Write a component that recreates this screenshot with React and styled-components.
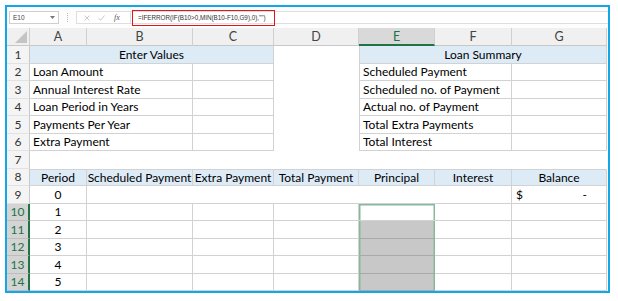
import React from 'react';
import styled, { createGlobalStyle, css } from 'styled-components';

const GREEN = '#217346';
const SEL = '#86b99b';
const LINE = '#d2d2d2';
const HDR_BLUE = '#ddebf7';

const Global = createGlobalStyle`
  html, body { margin: 0; padding: 0; background: #fff; }
  body { font-family: Lato, "Liberation Sans", sans-serif; }
`;

const Frame = styled.div`
  margin: 5px 0 0 5px;
  width: 605px;
  height: 288px;
  box-sizing: border-box;
  border: 2px solid #12a7e6;
  display: flex;
  flex-direction: column;
  overflow: hidden;
  background: #fff;
`;

const Toolbar = styled.div`
  flex: none;
  height: 21px;
  display: flex;
  align-items: center;
  background: #fdfdfd;
  font-family: "Liberation Sans", Arial, sans-serif;
`;

const NameBox = styled.div`
  box-sizing: border-box;
  margin-left: 2px;
  width: 50px;
  height: 13px;
  border: 1px solid #cfcfcf;
  background: #fff;
  display: flex;
  align-items: center;
  justify-content: space-between;
  padding: 0 3px 0 3px;
  font-size: 6.5px;
  color: #444;
`;

const Dots = styled.div`
  margin-left: 8px;
  width: 2px;
  height: 9px;
  border-left: 1px dotted #b8b8b8;
`;

const ButtonBox = styled.div`
  box-sizing: border-box;
  margin-left: 6px;
  width: 54px;
  height: 13px;
  display: flex;
  align-items: center;
  padding-left: 7px;
  gap: 8px;
  border: 1px solid #dedede;
  border-right: none;
  background: #fff;
`;

const Fx = styled.span`
  font-family: "Liberation Serif", serif;
  font-style: italic;
  font-size: 8px;
  color: #555;
  margin-left: 1px;
`;

const FormulaBar = styled.div`
  box-sizing: border-box;
  flex: 1;
  height: 13px;
  display: flex;
  align-items: center;
  border: 1px solid #dedede;
  border-right: none;
  background: #fff;
`;

const FormulaText = styled.div`
  box-sizing: border-box;
  flex: none;
  margin-left: 1px;
  width: 143px;
  height: 16px;
  border: 1.5px solid #e3141b;
  display: flex;
  align-items: center;
  padding-left: 5px;
  font-size: 6.3px;
  color: #333;
  white-space: nowrap;
`;

const Sheet = styled.div`
  flex: none;
  display: grid;
  grid-template-columns: 23px 57px 106px 81px 85px 76px 77px 95px;
  grid-template-rows: 18px repeat(14, 17.5px);
  font-size: 12px;
  color: #000;
`;

const Corner = styled.div`
  box-sizing: border-box;
  background: #f0f0f0;
  border-right: 1px solid #d0d0d0;
  border-bottom: 1px solid #c8c8c8;
  display: flex;
  align-items: flex-end;
  justify-content: flex-end;
  padding: 0 2px 2px 0;
`;

const ColHeader = styled.div`
  box-sizing: border-box;
  display: flex;
  align-items: center;
  justify-content: center;
  background: ${p => (p.$active ? '#d9d9d9' : '#f0f0f0')};
  color: ${p => (p.$active ? GREEN : '#444')};
  border-right: 1px solid #d0d0d0;
  border-bottom: ${p => (p.$active ? `2px solid ${GREEN}` : '1px solid #c8c8c8')};
  font-size: 12.5px;
`;

const RowHeader = styled.div`
  box-sizing: border-box;
  display: flex;
  align-items: center;
  justify-content: center;
  background: ${p => (p.$active ? '#d4d4d4' : '#f4f4f4')};
  color: ${p => (p.$active ? GREEN : '#333')};
  border-right: ${p => (p.$active ? `2px solid ${GREEN}` : '1px solid #c8c8c8')};
  border-bottom: 1px solid ${p => (p.$active ? '#bdbdbd' : '#e2e2e2')};
  font-size: 12px;
`;

const justify = { center: 'center', between: 'space-between', left: 'flex-start' };

const Cell = styled.div`
  grid-column: span ${p => p.$span || 1};
  box-sizing: border-box;
  min-width: 0;
  display: flex;
  align-items: center;
  justify-content: ${p => justify[p.$align || 'left']};
  padding: ${p => p.$pad || '0 3px'};
  background: ${p => p.$bg || '#fff'};
  border-top: ${p => (p.$t ? `1px solid ${LINE}` : 'none')};
  border-left: ${p => (p.$l ? `1px solid ${LINE}` : 'none')};
  border-right: ${p => (p.$r ? `1px solid ${LINE}` : 'none')};
  border-bottom: ${p => (p.$b ? `1px solid ${p.$bc || LINE}` : 'none')};
  white-space: nowrap;
  ${p =>
    p.$sel &&
    css`
      border-right: none;
      box-shadow: inset 1.5px 0 0 ${SEL}, inset -1.5px 0 0 ${SEL}
        ${p.$sel === 'top' ? `, inset 0 1.5px 0 ${SEL}` : ''};
    `}
`;

const CaretIcon = () => (
  <svg width="5" height="3" viewBox="0 0 5 3">
    <path d="M0 0 L5 0 L2.5 3 Z" fill="#777" />
  </svg>
);

const CrossIcon = () => (
  <svg width="6" height="6" viewBox="0 0 6 6">
    <path d="M0.5 0.5 L5.5 5.5 M5.5 0.5 L0.5 5.5" stroke="#bdbdbd" strokeWidth="0.8" fill="none" />
  </svg>
);

const CheckIcon = () => (
  <svg width="7" height="6" viewBox="0 0 7 6">
    <path d="M0.5 3.2 L2.5 5.3 L6.5 0.5" stroke="#bdbdbd" strokeWidth="0.8" fill="none" />
  </svg>
);

const CornerTriangle = () => (
  <svg width="12" height="12" viewBox="0 0 12 12">
    <path d="M12 0 L12 12 L0 12 Z" fill="#c4c4c4" />
  </svg>
);

const cols = ['A', 'B', 'C', 'D', 'E', 'F', 'G'];

const leftLabels = ['Loan Amount', 'Annual Interest Rate', 'Loan Period in Years', 'Payments Per Year', 'Extra Payment'];
const rightLabels = ['Scheduled Payment', 'Scheduled no. of Payment', 'Actual no. of Payment', 'Total Extra Payments', 'Total Interest'];
const tableHeads = ['Period', 'Scheduled Payment', 'Extra Payment', 'Total Payment', 'Principal', 'Interest', 'Balance'];

export default function App() {
  return (
    <>
      <Global />
      <Frame>
        <Toolbar>
          <NameBox>
            <span>E10</span>
            <CaretIcon />
          </NameBox>
          <Dots />
          <ButtonBox>
            <CrossIcon />
            <CheckIcon />
            <Fx>fx</Fx>
          </ButtonBox>
          <FormulaBar>
            <FormulaText>=IFERROR(IF(B10&gt;0,MIN(B10-F10,G9),0),"")</FormulaText>
          </FormulaBar>
        </Toolbar>
        <Sheet>
          <Corner>
            <CornerTriangle />
          </Corner>
          {cols.map(c => (
            <ColHeader key={c} $active={c === 'E'}>
              {c}
            </ColHeader>
          ))}

          <RowHeader>1</RowHeader>
          <Cell $span={3} $bg={HDR_BLUE} $align="center" $r $b>
            Enter Values
          </Cell>
          <Cell />
          <Cell $span={3} $bg={HDR_BLUE} $align="center" $l $r $b>
            Loan Summary
          </Cell>

          {leftLabels.map((label, i) => (
            <React.Fragment key={label}>
              <RowHeader>{i + 2}</RowHeader>
              <Cell $span={2} $r $b>
                {label}
              </Cell>
              <Cell $r $b />
              <Cell />
              <Cell $span={2} $l $r $b>
                {rightLabels[i]}
              </Cell>
              <Cell $r $b />
            </React.Fragment>
          ))}

          <RowHeader>7</RowHeader>
          <Cell $span={7} />

          <RowHeader>8</RowHeader>
          {tableHeads.map(h => (
            <Cell key={h} $bg={HDR_BLUE} $align="center" $pad="0" $t $r $b>
              {h}
            </Cell>
          ))}

          <RowHeader>9</RowHeader>
          <Cell $align="center" $r $b>
            0
          </Cell>
          <Cell $span={5} $r $b />
          <Cell $align="between" $pad="0 19px 0 4px" $r $b>
            <span>$</span>
            <span>-</span>
          </Cell>

          {[1, 2, 3, 4, 5].map(n => (
            <React.Fragment key={n}>
              <RowHeader $active>{n + 9}</RowHeader>
              <Cell $align="center" $r $b>
                {n}
              </Cell>
              <Cell $r $b />
              <Cell $r $b />
              <Cell $r $b />
              <Cell
                $sel={n === 1 ? 'top' : 'mid'}
                $bg={n === 1 ? '#fff' : '#c8c8c8'}
                $b
                $bc={n === 1 ? '#d2d2d2' : '#a9a9a9'}
              />
              <Cell $r $b />
              <Cell $r $b />
            </React.Fragment>
          ))}
        </Sheet>
      </Frame>
    </>
  );
}
